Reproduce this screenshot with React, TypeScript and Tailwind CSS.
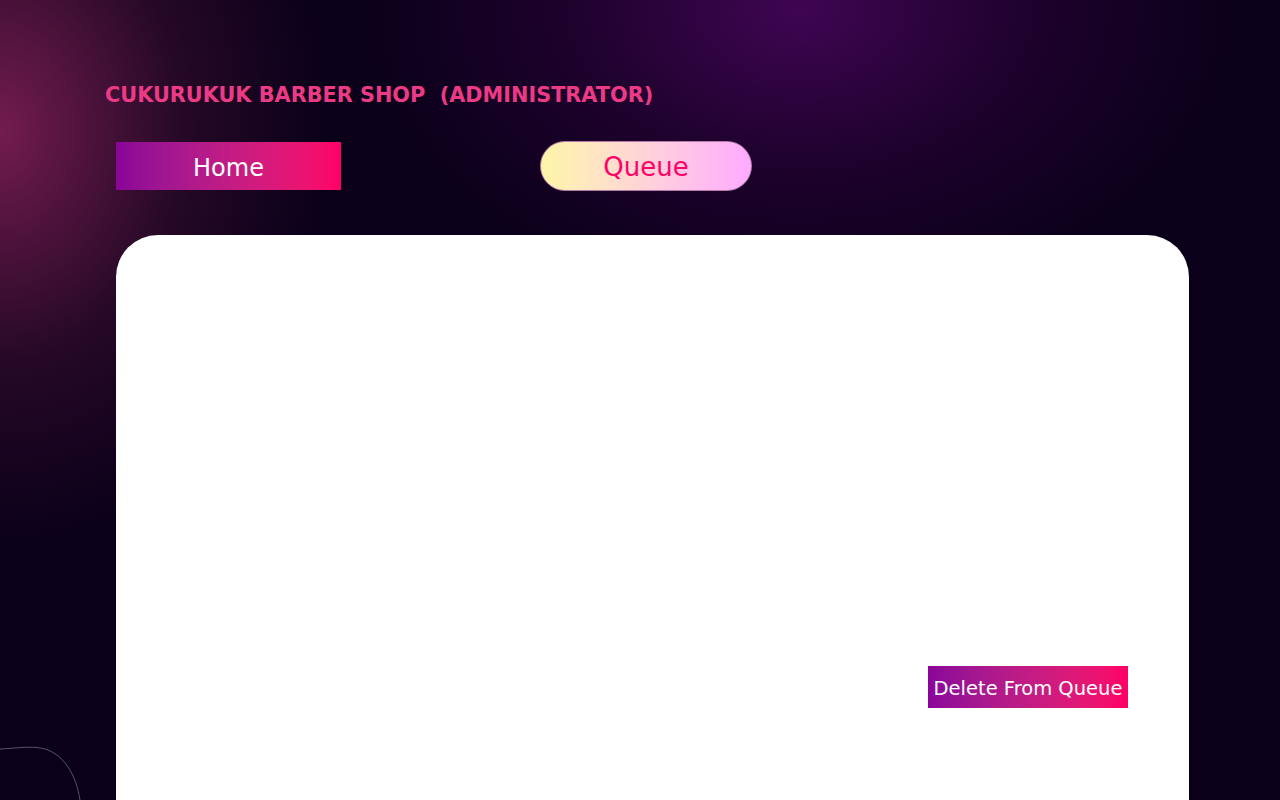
export default function App() {
  return (
    <div
      className="relative min-h-[800px] h-[800px] w-full overflow-hidden bg-[#0a0019] font-['DejaVu_Sans',sans-serif]"
    >
      {/* glows */}
      <div className="pointer-events-none absolute inset-0 bg-[radial-gradient(ellipse_330px_420px_at_0px_130px,#731c4f_0%,rgba(60,15,50,0.55)_55%,rgba(10,0,25,0)_100%)]" />
      <div className="pointer-events-none absolute inset-0 bg-[radial-gradient(ellipse_440px_300px_at_800px_10px,#3f0552_0%,rgba(45,3,60,0.6)_50%,rgba(10,0,25,0)_100%)]" />

      {/* decorative curve */}
      <svg className="pointer-events-none absolute bottom-0 left-0" width="90" height="60" viewBox="0 0 90 60">
        <path d="M0 9 C 20 8, 35 5, 48 10 C 65 17, 76 35, 80 60" fill="none" stroke="#5a5070" strokeWidth="1" />
      </svg>

      <div className="relative flex flex-col pl-[105px] pt-[82px]">
        <h1 className="text-[20.8px] font-bold leading-[26px] text-[#ec3a86] whitespace-pre">
          CUKURUKUK BARBER SHOP  (ADMINISTRATOR)
        </h1>

        <nav className="mt-[33px] flex items-center pl-[11px]">
          <button className="flex h-[48px] w-[225px] items-center justify-center bg-gradient-to-r from-[#8a0499] to-[#ff0066] pt-[3px] text-[24px] text-white">
            Home
          </button>
          <button className="ml-[199px] flex h-[50px] w-[212px] items-center justify-center rounded-full border border-[#b77aa8] bg-gradient-to-r from-[#fff6a8] to-[#ffaaff] pt-[2px] text-[26px] text-[#ff0066]">
            Queue
          </button>
        </nav>

        <main className="ml-[11px] mt-[44px] flex h-[700px] w-[1073px] flex-col rounded-t-[42px] bg-white">
          <div className="flex justify-end pr-[61px] pt-[431px]">
            <button className="flex h-[42px] w-[200px] items-center justify-center bg-gradient-to-r from-[#8a0499] to-[#ff0066] pt-[3px] text-[19.5px] leading-none text-white">
              Delete From Queue
            </button>
          </div>
        </main>
      </div>
    </div>
  )
}
